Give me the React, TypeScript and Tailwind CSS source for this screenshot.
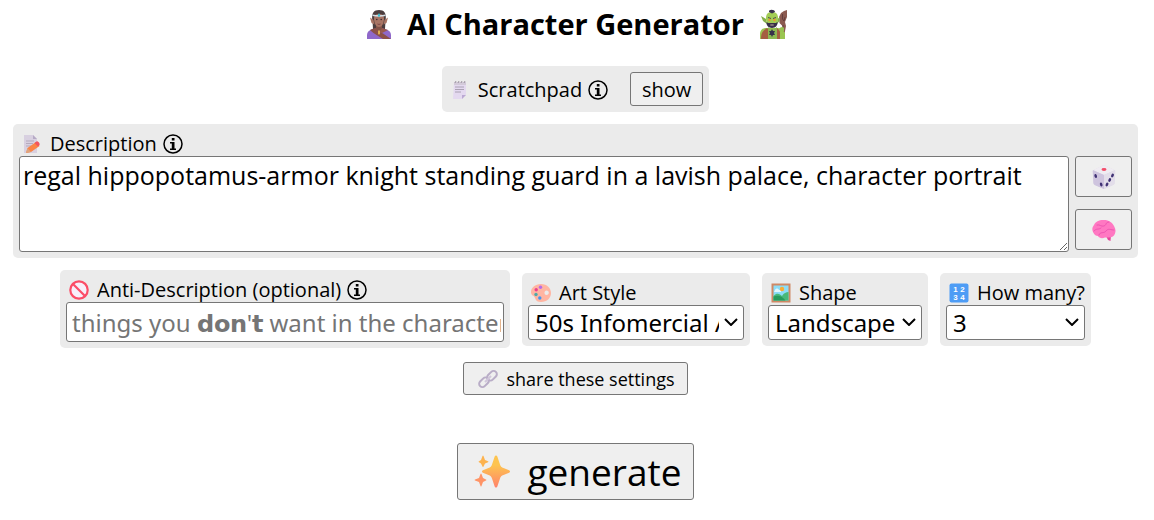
import { useState } from "react";

const panel: string = "rounded-[5px] bg-[#ebebeb] p-1.5";
const button: string =
    "flex items-center justify-center rounded-[3px] border border-[#767676] bg-[#efefef] hover:bg-[#e5e5e5]";
const field: string = "rounded-[3px] border border-[#767676] bg-white";

function InfoIcon(): React.ReactElement {
    return (
        <svg viewBox="0 0 20 20" className="size-5 shrink-0" aria-hidden="true">
            <circle cx="10" cy="10" r="9" fill="none" stroke="#000" strokeWidth="1.5" />
            <path d="M8.800 4h2.700v2.500H8.800zM7 8h4.500v6.600H13V16H7v-1.400h1.800V9.400H7z" fill="#000" />
        </svg>
    );
}

function ElfIcon(): React.ReactElement {
    return (
        <svg viewBox="0 0 24 30" className="h-[30px] w-6" aria-hidden="true">
            <path d="M5.500 12C4 4 7 1 12 1s8 3 6.500 11l-.5 8H6z" fill="#4b3d3e" />
            <path d="M0 30v-4c0-3 2-5 6-6l6-1 6 1c4 1 6 3 6 6v4z" fill="#8f68ca" />
            <path d="M6.500 11 3 8.500 4.500 14l3 1.500zM17.500 11 21 8.500 19.500 14l-3 1.500z" fill="#a87464" />
            <path d="M9 15h6v6l-3 2-3-2z" fill="#835348" />
            <path d="M7 9.500C7 6 9 5 12 5s5 1 5 4.500c0 5-2.300 8.500-5 8.500s-5-3.500-5-8.500z" fill="#a87565" />
            <path d="M3 21c2-1 4-2 6-2 2 3 4 4 7 5.500l8 5.500h-8C12 27.500 7 25 3 21z" fill="#8c5048" />
            <path d="m15 19 6 2-6 3-4-1c2-.5 3-2 4-4z" fill="#99594d" />
            <path d="M5.500 5.500c4 .8 9 .8 13 0v1.600c-4 .8-9 .8-13 0z" fill="#d5dfe6" />
            <path d="m12 4 1.300 2.300L12 8.600l-1.300-2.300z" fill="#37bfd3" />
            <circle cx="9.800" cy="10.500" r=".8" fill="#3a2930" />
            <circle cx="14.200" cy="10.500" r=".8" fill="#3a2930" />
            <path d="M10.500 15c1 .5 2 .5 3 0" fill="none" stroke="#753b40" strokeWidth=".9" />
            <path d="M11.200 21.500h1.600v3L12 26l-.8-1.500z" fill="#f4c653" />
        </svg>
    );
}

function OrcIcon(): React.ReactElement {
    return (
        <svg viewBox="0 0 28 30" className="h-[30px] w-7" aria-hidden="true">
            <path d="m21 30 1.500-13-3-3-.5-6 2-4 3-2 3-1v7l-2 5 1 4-2.500 13z" fill="#8b5a50" />
            <path d="M22.500 5v5l1.500 2 1-4M23 16v8" fill="none" stroke="#633e3d" />
            <path d="M0 30v-6c1-4 3-5 7-5h10c4 0 6 2 8 5v6z" fill="#9bc552" />
            <path d="M1 30c0-5 1-8 6-11l4 4 6-4 3 3v8z" fill="#a55f41" />
            <path d="m8 18 4 4 5-4v12H8z" fill="#8db951" />
            <path d="M6 10 1 7l2 5 4 3zM17.500 10 20 8l-.5 4-2.500 3z" fill="#86af4b" />
            <path d="M6 9c0-4 2-6 6-6s6 2 6 6-1 9-6 9-6-5-6-9z" fill="#a2cd55" />
            <path d="M9 3c-1-3 6-3 6 0l-3 1.500z" fill="#38314b" />
            <path d="m8 8.500 3 1M16 8.500l-3 1" stroke="#4b4b4a" />
            <circle cx="9.500" cy="11" r="1.200" fill="#f19434" />
            <circle cx="14.500" cy="11" r="1.200" fill="#f19434" />
            <path d="M6.500 13c2 1.500 3 1 5.500 1s3.500.5 5.500-1c.5 3-2 6-5.500 6s-6-3-5.500-6z" fill="#383049" />
            <path d="M10.300 16h3.400" stroke="#c4b0a0" />
            <path d="m12 20 1 2h2l-1 2 1 2h-2l-1 2-1-2H9l1-2-1-2h2z" fill="#363249" />
            <path d="M19 20c1-2 4-3 5-1v3l-4 1z" fill="#97c252" />
        </svg>
    );
}

function NotepadIcon(): React.ReactElement {
    return (
        <svg viewBox="0 0 20 20" className="size-5" aria-hidden="true">
            <path d="M4 2h12v13l-4 4H3z" fill="#e4d9f0" />
            <path d="M4 2h12v3H4z" fill="#d3cad9" />
            <path d="m5 3 1-2m2 2 1-2m2 2 1-2m2 2 1-2" stroke="#9d95a0" />
            <path d="M5 7h9M5 9.500h9M5 12h6" stroke="#a49cab" strokeWidth=".9" />
            <path d="M12 19v-4h4z" fill="#bba9d3" />
        </svg>
    );
}

function MemoIcon(): React.ReactElement {
    return (
        <svg viewBox="0 0 20 20" className="size-5" aria-hidden="true">
            <path d="M2 1h9l4 4v14H2z" fill="#d8d0e0" />
            <path d="M11 1v4h4z" fill="#b6aac5" />
            <path d="M4 7h8M4 9.500h7M4 12h5" stroke="#b5aabd" />
            <path d="m4 19 1.500-5 8.500-6 3.500 4-8.500 6z" fill="#fa8446" />
            <path d="m12.500 9 2-1.500c1-.8 4 2 3 3.500L16 12.500z" fill="#f3545f" />
            <path d="m4 19 1.500-5 3.500 4z" fill="#dfa47c" />
        </svg>
    );
}

function ProhibitedIcon(): React.ReactElement {
    return (
        <svg viewBox="0 0 20 20" className="size-5" aria-hidden="true">
            <circle cx="10" cy="10" r="8.700" fill="#f8effa" stroke="#fb4d67" strokeWidth="2.200" />
            <path d="m4 4 12 12" stroke="#fb4d67" strokeWidth="2.200" />
        </svg>
    );
}

function PaletteIcon(): React.ReactElement {
    return (
        <svg viewBox="0 0 20 20" className="size-5" aria-hidden="true">
            <path
                d="M10 1C4 1 0 5 0 9c0 4 3 3 4 6 1 3 3 4 6 4 6 0 10-4 10-9s-4-9-10-9zm5.500 6.500c1.500 0 2.300 1 2.300 2.200S17 12 15.500 12s-2-1-2-2.200.7-2.300 2-2.300z"
                fill="#ffb5a2"
                fillRule="evenodd"
            />
            <circle cx="9.500" cy="4.200" r="1.700" fill="#b66be8" />
            <circle cx="5.200" cy="6.800" r="1.700" fill="#ee3f8d" />
            <circle cx="5" cy="11.500" r="1.700" fill="#4faaa9" />
            <circle cx="8.800" cy="15" r="1.700" fill="#4395ef" />
        </svg>
    );
}

function PictureIcon(): React.ReactElement {
    return (
        <svg viewBox="0 0 20 20" className="size-5" aria-hidden="true">
            <path d="M.5.500h19v19H.500z" fill="#cf8965" />
            <path d="M2.500 2.500h15v15h-15z" fill="#8cddf7" />
            <path d="M4 7c1-2 3-2 4 0h2v2H3z" fill="#e0f8ff" />
            <circle cx="11" cy="6" r="2.200" fill="#f8ad35" />
            <path d="M2.500 13C6 9 9 11 11 13c2-3 4-4 6.500-4v8.500h-15z" fill="#48b97a" />
            <path d="M2.500 13.500c5-2 9 0 12 4h-12z" fill="#279b5d" />
        </svg>
    );
}

function NumbersIcon(): React.ReactElement {
    return (
        <svg viewBox="0 0 20 20" className="size-5" aria-hidden="true">
            <rect x=".5" y=".5" width="19" height="19" rx="2" fill="#4d9cf5" />
            <g fill="#fff" fontFamily="Liberation Sans, sans-serif" fontSize="8" fontWeight="700" textAnchor="middle">
                <text x="6.500" y="8.500">1</text>
                <text x="13.500" y="8.500">2</text>
                <text x="6.500" y="17.500">3</text>
                <text x="13.500" y="17.500">4</text>
            </g>
        </svg>
    );
}

function DieIcon(): React.ReactElement {
    return (
        <svg viewBox="0 0 24 26" className="h-[26px] w-6" aria-hidden="true">
            <path d="M1 6.500 12 1l11 5.500L22.300 20 12 25 1.700 20z" fill="#d8d0e2" />
            <path d="M11 1.300q1-.5 2 0l10 4.900L12 11 1 6.200z" fill="#efecf2" />
            <path d="M.7 7q0-1.200 1.200-.6L12 11v14l-9-3.800Q1.500 20.500 1.400 19z" fill="#cec4de" />
            <path d="M23.300 7q0-1.200-1.200-.6L12 11v14l9-3.800q1.500-.7 1.600-2.200z" fill="#e3deea" />
            <ellipse cx="12" cy="5.500" rx="2.500" ry="1.400" fill="#f34d69" />
            <g fill="#403274">
                <ellipse cx="3.700" cy="12" rx="1.300" ry="2" transform="rotate(-15 3.700 12)" />
                <ellipse cx="9.200" cy="20.500" rx="1.300" ry="2" transform="rotate(-15 9.200 20.500)" />
                <ellipse cx="20.500" cy="11.500" rx="1.300" ry="2" transform="rotate(25 20.500 11.500)" />
                <ellipse cx="17.700" cy="16" rx="1.300" ry="2" transform="rotate(25 17.700 16)" />
                <ellipse cx="15" cy="20.500" rx="1.300" ry="2" transform="rotate(25 15 20.500)" />
            </g>
        </svg>
    );
}

function BrainIcon(): React.ReactElement {
    return (
        <svg viewBox="0 0 24 24" className="size-6" aria-hidden="true">
            <path d="m14 18 5-1-.5 6-2.500-1-1-2z" fill="#e8459b" />
            <path
                d="M1.500 15C-.500 12 .3 9 2 7c1.500-3.500 5-5 9-5 5-.5 9 2 11 6 1.500 2.500 2 5 1 7.500-.8 2.500-3 4-6 4h-4c-3 1.500-6 .5-7-1.500-2 0-3.500-1-4.500-3z"
                fill="#ff78c2"
            />
            <path
                d="M2 13c2-3 5-1 7-3M5 7c3-1 4 2 7 1s1-4 5-4M7 17c1-4 5-1 7-4s5-1 8-1"
                fill="none"
                stroke="#ee55b2"
                strokeWidth="1"
                strokeLinecap="round"
            />
        </svg>
    );
}

function LinkIcon(): React.ReactElement {
    return (
        <svg viewBox="0 0 20 20" className="size-5" aria-hidden="true">
            <g fill="none" stroke="#b9adc7" strokeWidth="2">
                <rect x="8.500" y="3.500" width="11" height="6.500" rx="3.250" transform="rotate(-45 14 6.750)" />
                <rect x=".5" y="10" width="11" height="6.500" rx="3.250" transform="rotate(-45 6 13.250)" />
                <path d="m7 13 6-6" stroke="#d0c6da" />
            </g>
        </svg>
    );
}

function SparklesIcon(): React.ReactElement {
    return (
        <svg viewBox="0 0 36 34" className="h-[34px] w-9" aria-hidden="true">
            <defs>
                <linearGradient id="spark" x2="0" y2="1">
                    <stop offset=".3" stopColor="#fdc450" />
                    <stop offset="1" stopColor="#ff826b" />
                </linearGradient>
            </defs>
            <path
                d="M20.500 2c.7-2 2.300-2 3 0l2.500 7.500c.6 2 1.500 2.900 3.500 3.500l5 2c2 .7 2 2.300 0 3l-5 2c-2 .6-2.900 1.500-3.500 3.500L23.500 31c-.7 2-2.300 2-3 0L18 23.500c-.6-2-1.500-2.900-3.500-3.500l-5-2c-2-.7-2-2.300 0-3l5-2c2-.6 2.900-1.500 3.500-3.500z"
                fill="url(#spark)"
            />
            <path d="M6.500 19q.5-1 1 0l1.500 4 3 1.500q1 .5 0 1L9 27l-1.500 4q-.5 1-1 0L5 27l-4-1.500q-1-.5 0-1L5 23z" fill="#ff9466" />
            <path d="M8.500 1q.5-1 1 0L11 5l3 1.200q1 .5 0 1L11 8.500l-1.500 3q-.5 1-1 0L7 8.500 5 7.200q-1-.5 0-1L7 5z" fill="#fdb34f" />
        </svg>
    );
}

interface FieldLabelProps {
    htmlFor: string;
    icon: React.ReactElement;
    text: string;
    info?: boolean;
}

function FieldLabel({ htmlFor, icon, text, info }: FieldLabelProps): React.ReactElement {
    return (
        <label htmlFor={htmlFor} className="flex h-[26px] items-center gap-1.5 pt-0.5 pl-[3px] text-xl whitespace-nowrap">
            {icon}
            <span className="pl-0.5">{text}</span>
            {info && <InfoIcon />}
        </label>
    );
}

interface SelectFieldProps {
    id: string;
    value: string;
    options: string[];
    onChange: (value: string) => void;
}

function SelectField({ id, value, options, onChange }: SelectFieldProps): React.ReactElement {
    return (
        <div className="relative">
            <select
                id={id}
                value={value}
                onChange={(e) => onChange(e.target.value)}
                className={`${field} block h-[35px] w-full appearance-none pr-6 pl-1.5 font-['Noto_Sans',sans-serif] text-2xl leading-[33px]`}
            >
                {options.map((option: string) => (
                    <option key={option}>{option}</option>
                ))}
            </select>
            <svg
                viewBox="0 0 14 8"
                className="pointer-events-none absolute top-[13px] right-1.5 h-2 w-3.5"
                fill="none"
                stroke="#000"
                strokeWidth="2"
                aria-hidden="true"
            >
                <path d="m1 1 6 6 6-6" />
            </svg>
        </div>
    );
}

export default function App(): React.ReactElement {
    const [description, setDescription] = useState<string>(
        "regal hippopotamus-armor knight standing guard in a lavish palace, character portrait"
    );
    const [antiDescription, setAntiDescription] = useState<string>("");
    const [artStyle, setArtStyle] = useState<string>("50s Infomercial Anime");
    const [shape, setShape] = useState<string>("Landscape");
    const [count, setCount] = useState<string>("3");

    return (
        <main className="flex flex-col items-center bg-white pr-4 pl-[13px] font-['Open_Sans','Noto_Sans',sans-serif] text-black">
            <h1 className="flex h-12 items-center gap-4 pl-1 text-[29px] font-bold">
                <ElfIcon />
                AI Character Generator
                <OrcIcon />
            </h1>

            <section className={`${panel} mt-[18px] flex items-center pl-2 text-xl`}>
                <div className="flex items-center gap-1.5 pt-0.5">
                    <NotepadIcon />
                    <span className="pl-0.5">Scratchpad</span>
                    <InfoIcon />
                </div>
                <button type="button" className={`${button} ml-[22px] h-[34px] w-[73px] pt-0.5`}>
                    show
                </button>
            </section>

            <section className={`${panel} mt-3 w-full`}>
                <FieldLabel htmlFor="description" icon={<MemoIcon />} text="Description" info />
                <div className="flex gap-1.5">
                    <textarea
                        id="description"
                        value={description}
                        onChange={(e) => setDescription(e.target.value)}
                        className={`${field} h-24 min-w-0 flex-1 resize px-[3px] text-[25px]`}
                    />
                    <div className="flex flex-col gap-3">
                        <button type="button" aria-label="Random description" className={`${button} h-[41px] w-[57px]`}>
                            <DieIcon />
                        </button>
                        <button type="button" aria-label="Improve description" className={`${button} h-[41px] w-[57px]`}>
                            <BrainIcon />
                        </button>
                    </div>
                </div>
            </section>

            <div className="mt-3 flex flex-wrap items-center justify-center gap-3">
                <div className={`${panel} w-[450px]`}>
                    <FieldLabel htmlFor="anti" icon={<ProhibitedIcon />} text="Anti-Description (optional)" info />
                    <input
                        id="anti"
                        type="text"
                        value={antiDescription}
                        onChange={(e) => setAntiDescription(e.target.value)}
                        placeholder="things you 𝗱𝗼𝗻'𝘁 want in the character image"
                        className={`${field} block h-10 w-full pr-0.5 pl-[5px] font-['Noto_Sans',sans-serif] text-2xl placeholder:text-[#757575]`}
                    />
                </div>
                <div className={`${panel} w-[228px]`}>
                    <FieldLabel htmlFor="style" icon={<PaletteIcon />} text="Art Style" />
                    <SelectField
                        id="style"
                        value={artStyle}
                        options={["50s Infomercial Anime", "Painted Anime"]}
                        onChange={setArtStyle}
                    />
                </div>
                <div className={`${panel} w-[166px]`}>
                    <FieldLabel htmlFor="shape" icon={<PictureIcon />} text="Shape" />
                    <SelectField
                        id="shape"
                        value={shape}
                        options={["Portrait", "Square", "Landscape"]}
                        onChange={setShape}
                    />
                </div>
                <div className={`${panel} w-[151px]`}>
                    <FieldLabel htmlFor="count" icon={<NumbersIcon />} text="How many?" />
                    <SelectField id="count" value={count} options={["1", "3", "6"]} onChange={setCount} />
                </div>
            </div>

            <button type="button" className={`${button} mt-3.5 h-[33px] gap-2 pr-3 pl-3.5 text-lg`}>
                <LinkIcon />
                share these settings
            </button>

            <button type="button" className={`${button} mt-12 h-[57px] gap-[18px] pr-3 pl-4 text-[37px]`}>
                <SparklesIcon />
                generate
            </button>
        </main>
    );
}
